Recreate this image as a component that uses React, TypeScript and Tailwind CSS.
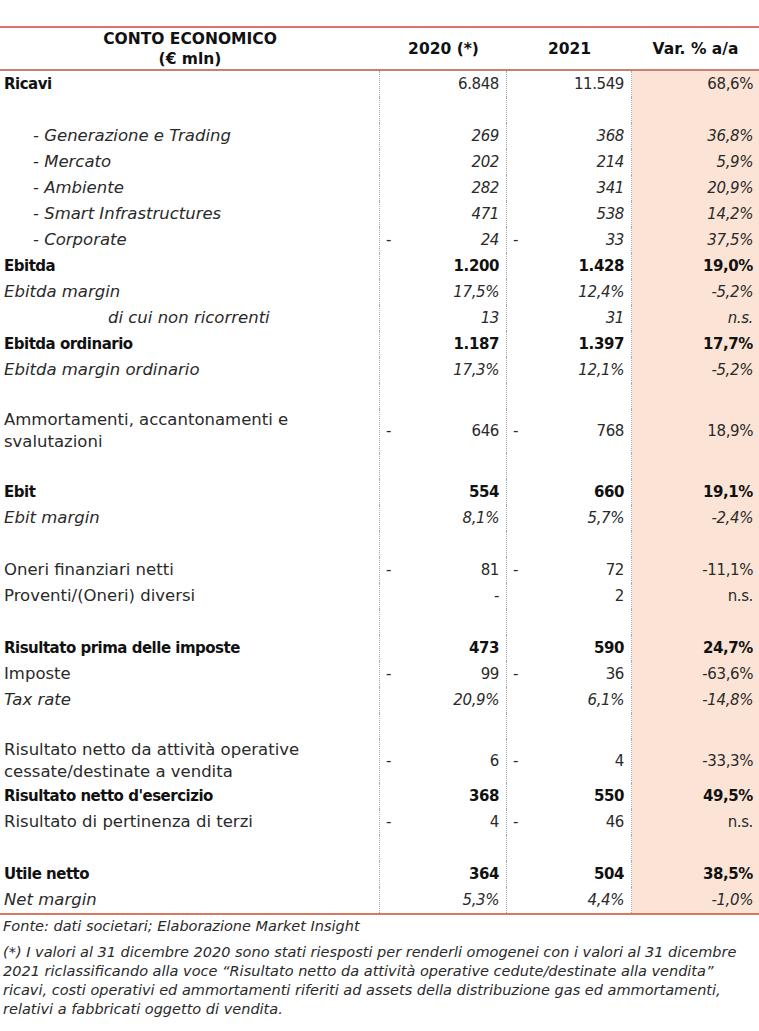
import React from "react";

type K = "b" | "i" | "n";
type Row = {
  label?: React.ReactNode;
  kind?: K;
  vk?: K;
  indent?: string;
  a?: string;
  an?: boolean;
  b?: string;
  bn?: boolean;
  c?: string;
  tall?: boolean;
};

const rows: Row[] = [
  { label: "Ricavi", kind: "b", vk: "n", a: "6.848", b: "11.549", c: "68,6%" },
  {},
  { label: "- Generazione e Trading", kind: "i", indent: "pl-[33px]", a: "269", b: "368", c: "36,8%" },
  { label: "- Mercato", kind: "i", indent: "pl-[33px]", a: "202", b: "214", c: "5,9%" },
  { label: "- Ambiente", kind: "i", indent: "pl-[33px]", a: "282", b: "341", c: "20,9%" },
  { label: "- Smart Infrastructures", kind: "i", indent: "pl-[33px]", a: "471", b: "538", c: "14,2%" },
  { label: "- Corporate", kind: "i", indent: "pl-[33px]", a: "24", an: true, b: "33", bn: true, c: "37,5%" },
  { label: "Ebitda", kind: "b", a: "1.200", b: "1.428", c: "19,0%" },
  { label: "Ebitda margin", kind: "i", a: "17,5%", b: "12,4%", c: "-5,2%" },
  { label: "di cui non ricorrenti", kind: "i", indent: "pl-[108px]", a: "13", b: "31", c: "n.s." },
  { label: "Ebitda ordinario", kind: "b", a: "1.187", b: "1.397", c: "17,7%" },
  { label: "Ebitda margin ordinario", kind: "i", a: "17,3%", b: "12,1%", c: "-5,2%" },
  {},
  {
    label: (
      <>
        Ammortamenti, accantonamenti e<br />
        svalutazioni
      </>
    ),
    kind: "n",
    tall: true,
    a: "646",
    an: true,
    b: "768",
    bn: true,
    c: "18,9%",
  },
  {},
  { label: "Ebit", kind: "b", a: "554", b: "660", c: "19,1%" },
  { label: "Ebit margin", kind: "i", a: "8,1%", b: "5,7%", c: "-2,4%" },
  {},
  { label: "Oneri finanziari netti", kind: "n", a: "81", an: true, b: "72", bn: true, c: "-11,1%" },
  { label: "Proventi/(Oneri) diversi", kind: "n", a: "-", b: "2", c: "n.s." },
  {},
  { label: "Risultato prima delle imposte", kind: "b", a: "473", b: "590", c: "24,7%" },
  { label: "Imposte", kind: "n", a: "99", an: true, b: "36", bn: true, c: "-63,6%" },
  { label: "Tax rate", kind: "i", a: "20,9%", b: "6,1%", c: "-14,8%" },
  {},
  {
    label: (
      <>
        Risultato netto da attività operative
        <br />
        cessate/destinate a vendita
      </>
    ),
    kind: "n",
    tall: true,
    a: "6",
    an: true,
    b: "4",
    bn: true,
    c: "-33,3%",
  },
  { label: "Risultato netto d'esercizio", kind: "b", a: "368", b: "550", c: "49,5%" },
  { label: "Risultato di pertinenza di terzi", kind: "n", a: "4", an: true, b: "46", bn: true, c: "n.s." },
  {},
  { label: "Utile netto", kind: "b", a: "364", b: "504", c: "38,5%" },
  { label: "Net margin", kind: "i", a: "5,3%", b: "4,4%", c: "-1,0%" },
];

function labelStyle(kind?: K) {
  if (kind === "b") return "font-bold text-[15px] tracking-[-0.5px] text-[#111]";
  if (kind === "i") return "italic text-[16.5px] text-[#2a2a2a]";
  return "text-[16.5px] text-[#2a2a2a]";
}

function valueStyle(kind?: K) {
  if (kind === "b") return "font-bold text-[15px] tracking-[-0.4px] text-[#111]";
  if (kind === "i") return "italic text-[15px] tracking-[-0.4px] text-[#2a2a2a]";
  return "text-[15px] tracking-[-0.4px] text-[#2a2a2a]";
}

function Cell({ v, neg, kind, last }: { v?: string; neg?: boolean; kind?: K; last?: boolean }) {
  return (
    <div
      className={
        "relative flex items-center justify-end " +
        (last ? "pr-[6px] bg-[#fbe4d5]" : "pr-[7px] border-r border-dotted border-[#a8a8a8]")
      }
    >
      {neg && <span className="absolute left-[6px] text-[15px] text-[#2a2a2a] font-normal not-italic">-</span>}
      {v && <span className={valueStyle(kind)}>{v}</span>}
    </div>
  );
}

export default function App() {
  return (
    <div className="w-[759px] h-[1031px] bg-white font-['DejaVu_Sans',sans-serif] text-[#222] pt-[26px] overflow-hidden">
      <div className="border-t-2 border-[#e2706a]">
        <div className="grid grid-cols-[380px_127px_125px_127px] h-[43px] border-b-2 border-[#c98070] font-bold text-[15.5px] text-[#111] leading-[20px]">
          <div className="flex flex-col items-center justify-center">
            <span>CONTO ECONOMICO</span>
            <span>(€ mln)</span>
          </div>
          <div className="flex items-center justify-center">2020 (*)</div>
          <div className="flex items-center justify-center">2021</div>
          <div className="flex items-center justify-center">Var. % a/a</div>
        </div>
        <div className="border-b-2 border-[#d9775f]">
          {rows.map((r, i) => (
            <div
              key={i}
              className={"grid grid-cols-[380px_127px_125px_127px] " + (r.tall ? "h-[44px]" : "h-[26px]")}
            >
              <div
                className={
                  "flex items-center border-r border-dotted border-[#a8a8a8] leading-[22px] " +
                  (r.indent ?? "pl-[4px]") +
                  " " +
                  labelStyle(r.kind)
                }
              >
                {r.label && <span>{r.label}</span>}
              </div>
              <Cell v={r.a} neg={r.an} kind={r.vk ?? r.kind} />
              <Cell v={r.b} neg={r.bn} kind={r.vk ?? r.kind} />
              <Cell v={r.c} kind={r.vk ?? r.kind} last />
            </div>
          ))}
        </div>
      </div>
      <div className="pl-[3px] italic text-[14.5px] text-[#2a2a2a]">
        <div className="leading-[18px] mt-[2px] whitespace-nowrap">Fonte: dati societari; Elaborazione Market Insight</div>
        <div className="mt-[8px] leading-[19px] whitespace-nowrap">
          <div>(*) I valori al 31 dicembre 2020 sono stati riesposti per renderli omogenei con i valori al 31 dicembre</div>
          <div>2021 riclassificando alla voce “Risultato netto da attività operative cedute/destinate alla vendita”</div>
          <div>ricavi, costi operativi ed ammortamenti riferiti ad assets della distribuzione gas ed ammortamenti,</div>
          <div>relativi a fabbricati oggetto di vendita.</div>
        </div>
      </div>
    </div>
  );
}
